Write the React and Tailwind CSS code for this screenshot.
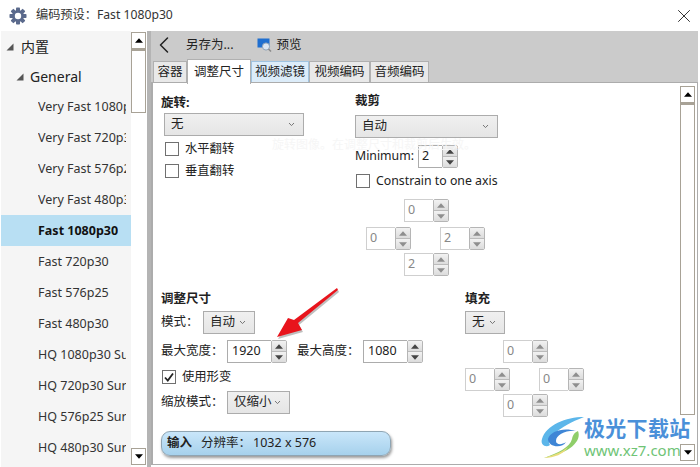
import { ChevronLeft, X } from "lucide-react"

const presets = [
  "Very Fast 1080p30", "Very Fast 720p30", "Very Fast 576p25", "Very Fast 480p30",
  "Fast 1080p30", "Fast 720p30", "Fast 576p25", "Fast 480p30",
  "HQ 1080p30 Surround", "HQ 720p30 Surround", "HQ 576p25 Surround", "HQ 480p30 Surround",
]

function Gear() {
  return (
    <svg width="18" height="18" viewBox="0 0 18 18">
      <g fill="#5b6a8c">
        <circle cx="9" cy="9" r="6" />
        <rect x="7" y="0.5" width="4" height="17" rx="0.8" />
        <rect x="7" y="0.5" width="4" height="17" rx="0.8" transform="rotate(45 9 9)" />
        <rect x="7" y="0.5" width="4" height="17" rx="0.8" transform="rotate(90 9 9)" />
        <rect x="7" y="0.5" width="4" height="17" rx="0.8" transform="rotate(135 9 9)" />
      </g>
      <circle cx="9" cy="9" r="3.2" fill="#fff" />
    </svg>
  )
}

function PreviewIcon() {
  return (
    <svg width="15" height="15" viewBox="0 0 15 15">
      <rect x="0.5" y="0.5" width="12" height="9" fill="#1f6fd0" />
      <circle cx="9" cy="8.5" r="3.6" fill="#dbe6f2" stroke="#8fa3b8" />
      <path d="M11.5 11 L14 13.5" stroke="#8a8a8a" strokeWidth="1.6" />
    </svg>
  )
}

function Triangle({ down, className }) {
  return (
    <svg width="9" height="5" viewBox="0 0 9 5" className={className}>
      <path d={down ? "M0 0 H9 L4.5 5 Z" : "M0 5 H9 L4.5 0 Z"} fill="currentColor" />
    </svg>
  )
}

// expanded marker of the tree, the corner triangle
function TreeArrow({ className }) {
  return (
    <svg width="8" height="8" viewBox="0 0 8 8" className={className}>
      <path d="M7.5 0.5 V7.5 H0.5 Z" fill="#555" />
    </svg>
  )
}

function ScrollButton({ down }) {
  return (
    <div className="h-[17px] w-[15px] shrink-0 flex items-center justify-center border border-[#a8a296] bg-white text-black">
      <Triangle down={down} className="w-[8px]" />
    </div>
  )
}

function Scrollbar({ thumb, className }) {
  return (
    <div className={`flex flex-col w-[15px] shrink-0 bg-white ${className}`}>
      <ScrollButton />
      <div className={`${thumb} w-[15px] border border-t-2 border-[#a8a296] bg-white`} />
      <div className="flex-1" />
      <ScrollButton down />
    </div>
  )
}

function Chevron() {
  return (
    <svg width="7" height="5" viewBox="0 0 7 5" className="shrink-0">
      <path d="M1 1 L3.5 3.6 L6 1" fill="none" stroke="#777" strokeWidth="1" />
    </svg>
  )
}

function Select({ label, className }) {
  return (
    <div className={`h-[23px] flex items-center justify-between pl-[6px] pr-[8px] border border-[#acacac] bg-gradient-to-b from-[#f0f0f0] to-[#e5e5e5] text-[12.5px] text-[#222] ${className}`}>
      <span>{label}</span>
      <Chevron />
    </div>
  )
}

function Check({ label, checked, className }) {
  return (
    <div className={`flex items-center gap-[6px] ${className}`}>
      <div className="w-[14px] h-[14px] border border-[#707070] bg-white flex items-center justify-center shrink-0">
        {checked && (
          <svg width="12" height="12" viewBox="0 0 12 12">
            <path d="M2 6.5 L4.8 9.5 L10 2.5" fill="none" stroke="#222" strokeWidth="1.8" />
          </svg>
        )}
      </div>
      <span className="text-[12.3px] leading-none text-[#222]">{label}</span>
    </div>
  )
}

function Spinner({ value, dim, boxClass }) {
  return (
    <div className="flex h-[23px]">
      <div className={`border ${dim ? "border-[#cfcfcf] text-[#888]" : "border-[#acacac] text-[#222]"} border-r-0 bg-white flex items-center pl-[3px] text-[12.5px] ${boxClass}`}>
        {value}
      </div>
      <div className={`w-[16px] h-[23px] flex flex-col rounded-[2px] border border-[#b5b5b5] overflow-hidden ${dim ? "text-[#8e8e8e]" : "text-[#444]"}`}>
        <div className="h-[11px] flex items-center justify-center border-b border-[#bbb] bg-gradient-to-b from-[#f2f2f2] to-[#dcdcdc]">
          <Triangle className="w-[8px]" />
        </div>
        <div className="flex-1 flex items-center justify-center bg-gradient-to-b from-[#f2f2f2] to-[#dcdcdc]">
          <Triangle down className="w-[8px]" />
        </div>
      </div>
    </div>
  )
}

function Cross({ top, left, right, bottom, className }) {
  return (
    <div className={`grid grid-cols-[45px_29px_45px] w-[119px] ${className}`}>
      <div className="col-start-1 col-span-3 flex pl-[38px] mb-[5px]">
        <Spinner value={top} dim boxClass="w-[29px]" />
      </div>
      <div className="col-start-1"><Spinner value={left} dim boxClass="w-[29px]" /></div>
      <div className="col-start-3"><Spinner value={right} dim boxClass="w-[29px]" /></div>
      <div className="col-start-1 col-span-3 flex pl-[38px] mt-[3px]">
        <Spinner value={bottom} dim boxClass="w-[29px]" />
      </div>
    </div>
  )
}

function Tab({ label, active, hover, className }) {
  let look = "h-[22px] mt-[2px] border-[#b0b0b0] bg-[#e9e9e9]"
  if (active) look = "h-[25px] border-[#b0b0b0] border-b-0 bg-white -mb-px z-10"
  if (hover) look = "h-[22px] mt-[2px] border-[#9fc3e0] bg-[#dcecf9]"
  return (
    <div className={`flex items-center justify-center border text-[12.5px] text-[#222] ${look} ${className}`}>
      {label}
    </div>
  )
}

export default function App() {
  return (
    <div className="relative w-[700px] h-[467px] overflow-hidden bg-white font-['Noto_Sans','Noto_Sans_CJK_SC',sans-serif] text-[#222]">
      {/* title bar */}
      <div className="h-[31px] flex items-center pl-[9px] pr-[5px]">
        <Gear />
        <span className="ml-[9px] text-[12.2px] text-[#333]">编码预设：Fast 1080p30</span>
        <X className="ml-auto" size={22} strokeWidth={1} color="#222" />
      </div>

      <div className="flex h-[436px]">
        {/* preset tree */}
        <div className="w-[130px] ml-px bg-[#f5f5f5] overflow-hidden shrink-0">
          <div className="h-[31px] flex items-center pl-[5px] text-[14px]">
            <TreeArrow className="mr-[7px]" />
            内置
          </div>
          <div className="h-[29px] flex items-center pl-[15px] text-[14px]">
            <TreeArrow className="mr-[6px]" />
            General
          </div>
          {presets.map((p) => (
            <div key={p} className={`h-[31px] flex items-center pl-[37px] pr-[5px] pt-px text-[12.5px] whitespace-nowrap ${p === "Fast 1080p30" ? "bg-[#b8dff3] font-bold text-[#111]" : "text-[#333]"}`}>
              <span className="overflow-hidden">{p}</span>
            </div>
          ))}
        </div>
        <Scrollbar thumb="h-[64px]" className="mr-px pt-px pb-[2px]" />
        <div className="w-[4px] bg-[#b4b4b4] shrink-0" />

        {/* editor */}
        <div className="flex-1 flex flex-col mr-[2px] mb-[2px] min-w-0">
          <div className="h-[28px] bg-[#cbcbcb] flex items-center text-[12.5px]">
            <ChevronLeft className="-ml-px" size={28} strokeWidth={1.3} color="#222" />
            <span className="ml-[8px]">另存为...</span>
            <span className="ml-[23px]"><PreviewIcon /></span>
            <span className="ml-[5px]">预览</span>
          </div>
          <div className="h-[23px] bg-[#cbcbcb] flex items-start pl-[2px]">
            <Tab label="容器" className="w-[34px]" />
            <Tab label="调整尺寸" active className="w-[64px]" />
            <Tab label="视频滤镜" hover className="w-[58px]" />
            <Tab label="视频编码" className="w-[61px]" />
            <Tab label="音频编码" className="w-[59px]" />
          </div>
          <div className="flex-1 flex border border-[#acacac] border-l-2 bg-white min-h-0">
            <div className="flex-1 flex flex-col pl-[8px] min-w-0">
              <div className="flex">
                <div className="w-[194px] shrink-0 pt-[11px]">
                  <div className="font-bold text-[12.5px] leading-[18px]">旋转:</div>
                  <Select label="无" className="w-[140px] ml-[3px] mt-px" />
                  <Check label="水平翻转" className="mt-[6px] ml-[4px]" />
                  <Check label="垂直翻转" className="mt-[8px] ml-[4px]" />
                </div>
                <div className="pt-[9px]">
                  <div className="font-bold text-[12.5px] leading-[18px]">裁剪</div>
                  <Select label="自动" className="w-[143px] mt-[5px]" />
                  <div className="flex items-center mt-[7px] text-[12.3px]">
                    <span className="w-[63px]">Minimum:</span>
                    <Spinner value="2" boxClass="w-[24px]" />
                  </div>
                  <Check label="Constrain to one axis" className="mt-[6px] ml-px" />
                  <Cross top="0" left="0" right="2" bottom="2" className="mt-[11px] ml-[11px]" />
                </div>
              </div>
              <div className="flex mt-[14px]">
                <div className="w-[304px] shrink-0">
                  <div className="font-bold text-[12.5px] leading-[18px]">调整尺寸</div>
                  <div className="flex items-center mt-[3px] text-[12.5px]">
                    <span className="w-[42px]">模式：</span>
                    <Select label="自动" className="w-[52px]" />
                  </div>
                  <div className="flex items-center mt-[6px] text-[12.5px]">
                    <span className="w-[66px]">最大宽度：</span>
                    <Spinner value="1920" boxClass="w-[44px] pl-[4px]" />
                    <span className="ml-[10px] w-[66px]">最大高度：</span>
                    <Spinner value="1080" boxClass="w-[44px] pl-[4px]" />
                  </div>
                  <Check label="使用形变" checked className="mt-[7px] ml-px" />
                  <div className="flex items-center mt-[7px] text-[12.5px]">
                    <span className="w-[66px]">缩放模式：</span>
                    <Select label="仅缩小" className="w-[63px]" />
                  </div>
                  <div className="w-[230px] h-[25px] mt-[17px] flex items-center pl-[5px] rounded-[9px] border border-[#8fa5b3] bg-gradient-to-b from-[#c9e6fa] to-[#a6d1ec] shadow-[1px_2px_3px_rgba(0,0,0,0.4)] text-[12.5px]">
                    <span className="font-bold">输入</span>
                    <span className="ml-[9px]">分辨率：</span>
                    <span className="ml-[2px]">1032 x 576</span>
                  </div>
                </div>
                <div>
                  <div className="font-bold text-[12.5px] leading-[18px]">填充</div>
                  <Select label="无" className="w-[40px] mt-[3px]" />
                  <Cross top="0" left="0" right="0" bottom="0" className="mt-[6px]" />
                </div>
              </div>
            </div>
            <Scrollbar thumb="h-[312px]" className="mr-[2px] my-[3px]" />
          </div>
        </div>
      </div>

      {/* faint hint under the crop column */}
      <div className="absolute left-[272px] top-[136px] text-[12px] text-[#f6f6f6]">旋转图像。在调整尺寸和裁剪后生效。</div>

      {/* red annotation arrow */}
      <svg className="absolute left-[270px] top-[285px]" width="75" height="58" viewBox="0 0 75 58">
        <path d="M68 5 L28 38 L32 45 L7 52 L18 33 L24 35 L67 3 Z" fill="#000" opacity="0.25" transform="translate(1 2)" />
        <path d="M68 5 L28 38 L32 45 L7 52 L18 33 L24 35 L67 3 Z" fill="#e8141c" />
      </svg>

      {/* watermark */}
      <div className="absolute left-[540px] top-[415px] flex items-start">
        <svg width="46" height="44" viewBox="0 0 46 44">
          <path d="M44 2 C26 2 6 10 2 24 C0 30 6 33 10 30 C6 24 18 12 44 2 Z" fill="#5cb6ea" />
          <path d="M8 24 C10 16 24 12 36 16 C26 15 16 20 16 26 C16 30 22 30 26 27 C22 34 8 32 8 24 Z" fill="#3f86d6" />
          <path d="M38 16 C42 26 30 38 4 43 C18 38 30 32 32 24 C33 20 34 18 38 16 Z" fill="#8fce6a" />
          <path d="M4 43 C14 40 22 37 28 32 C24 39 14 43 4 43 Z" fill="#e9dc7a" />
        </svg>
        <div className="-ml-[2px] flex flex-col">
          <span className="text-[21px] leading-[26px] font-bold tracking-[0.3px] text-[#4a90d9]">极光下载站</span>
          <span className="text-[15px] leading-[18px] text-[#6fc476]">www.xz7.com</span>
        </div>
      </div>
    </div>
  )
}
